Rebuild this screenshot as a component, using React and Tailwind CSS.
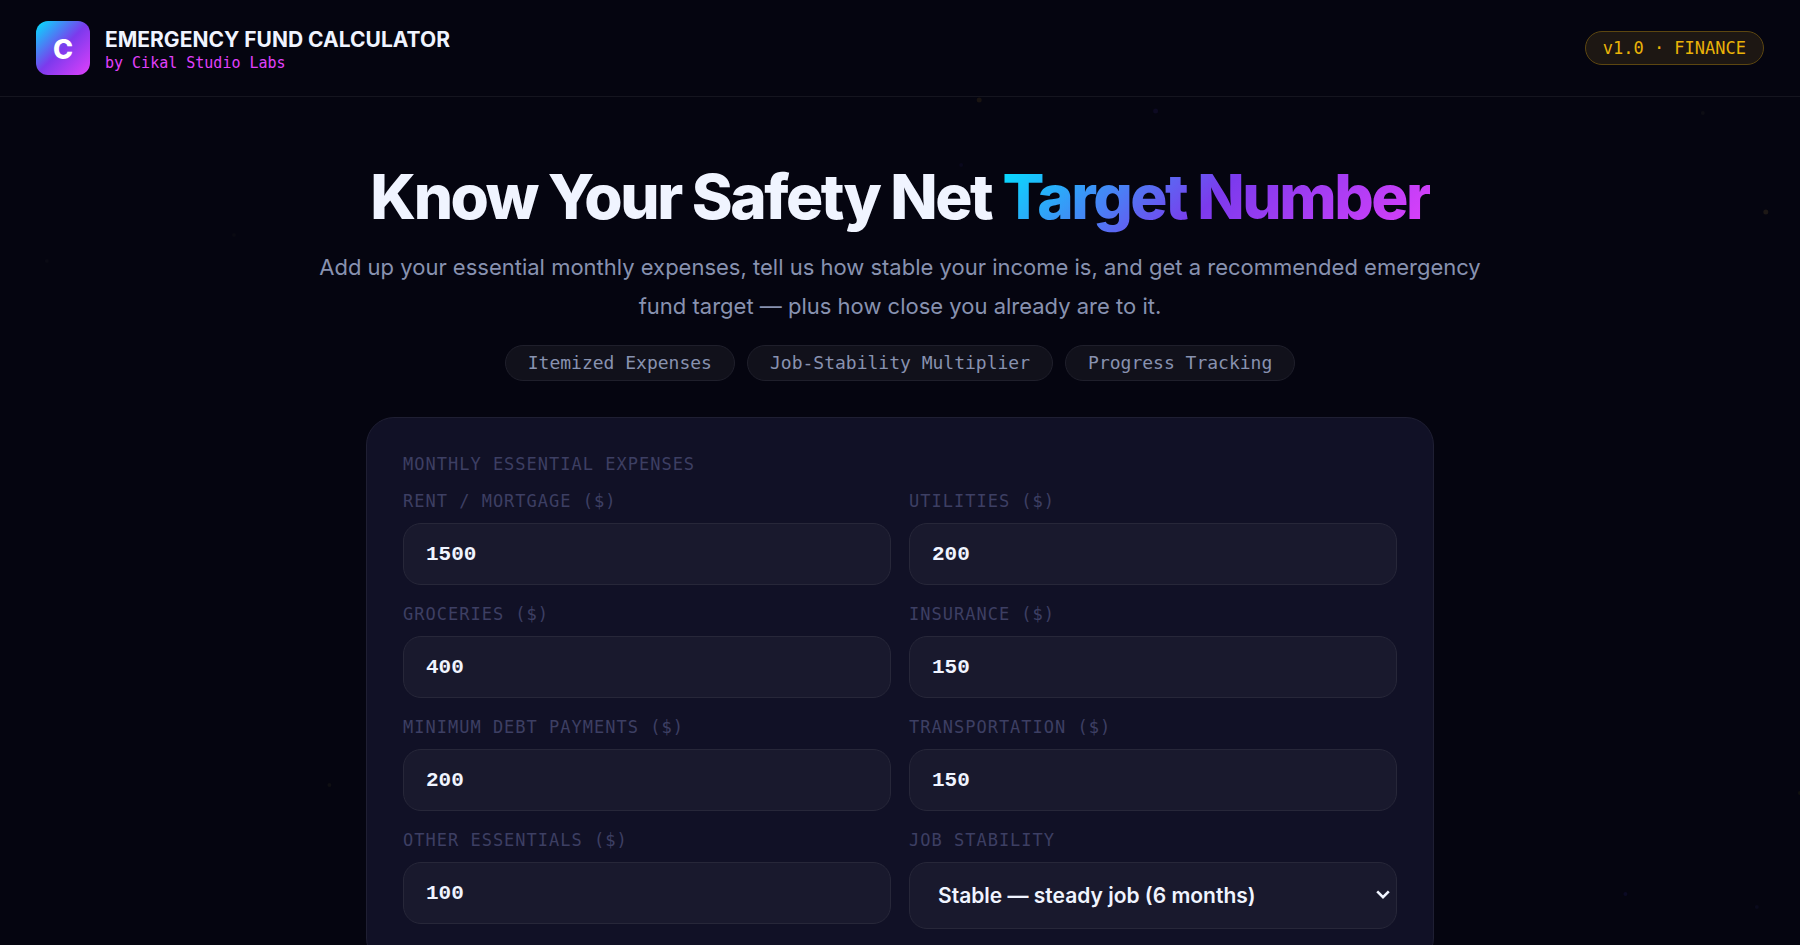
import React from "react"

const tags = ["Itemized Expenses", "Job-Stability Multiplier", "Progress Tracking"]

const fields = [
  { id: "rent", label: "Rent / Mortgage ($)", value: 1500 },
  { id: "utilities", label: "Utilities ($)", value: 200 },
  { id: "groceries", label: "Groceries ($)", value: 400 },
  { id: "insurance", label: "Insurance ($)", value: 150 },
  { id: "debt", label: "Minimum Debt Payments ($)", value: 200 },
  { id: "transport", label: "Transportation ($)", value: 150 },
  { id: "other", label: "Other Essentials ($)", value: 100 },
]

const Particles = (
  <svg className="absolute inset-0 -z-10 h-full w-full" aria-hidden="true">
    <circle cx="54.4%" cy="100" r="2.5" fill="#191412" />
    <circle cx="64.2%" cy="111" r="2.5" fill="#0d0a22" />
    <circle cx="94.6%" cy="113" r="2" fill="#0d0d14" />
    <circle cx="98.1%" cy="212" r="2.5" fill="#1d1816" />
    <circle cx="53.4%" cy="165" r="2" fill="#0a081c" />
    <circle cx="13%" cy="235" r="2" fill="#0a0a12" />
    <circle cx="2.6%" cy="261" r="2" fill="#0a0a14" />
    <circle cx="18.3%" cy="785" r="2" fill="#0f0f13" />
    <circle cx="90.3%" cy="894" r="2" fill="#0b0a24" />
    <circle cx="97.6%" cy="907" r="2" fill="#0a0a1c" />
    <circle cx="100%" cy="793" r="2" fill="#121210" />
  </svg>
)

function Header() {
  return (
    <header className="flex items-center justify-between border-b border-[#15151f] px-9 py-[21px]">
      <div className="flex items-center gap-[15px]">
        <div className="flex size-[54px] items-center justify-center rounded-xl bg-[linear-gradient(135deg,#00e5ff,#7c3aed_50%,#e040fb)] pt-1 text-[27px] font-extrabold text-white">
          C
        </div>
        <div className="pt-1">
          <div className="text-[21px] leading-[26px] font-bold">EMERGENCY FUND CALCULATOR</div>
          <div className="font-['DejaVu_Sans_Mono',monospace] text-[15px] leading-5 text-[#e040fb]">
            by Cikal Studio Labs
          </div>
        </div>
      </div>
      <span className="rounded-full border border-[#5c4610] bg-[#1d1713] px-[17px] py-1 font-['DejaVu_Sans_Mono',monospace] text-[17px] leading-6 text-[#eab308]">
        v1.0 · FINANCE
      </span>
    </header>
  )
}

function Hero() {
  return (
    <section className="flex flex-col items-center px-6 pt-16 text-center">
      <h1 className="text-[62px] leading-[72px] font-extrabold tracking-[-0.04em]">
        Know Your Safety Net{" "}
        <span className="bg-[linear-gradient(135deg,#00e5ff,#7c3aed_50%,#e040fb)] bg-clip-text text-transparent">
          Target Number
        </span>
      </h1>
      <p className="mt-[15px] max-w-[1170px] text-[22px] leading-[39px] text-[#8892b0]">
        Add up your essential monthly expenses, tell us how stable your income is, and get a
        recommended emergency fund target — plus how close you already are to it.
      </p>
      <ul className="mt-[19px] flex flex-wrap justify-center gap-3">
        {tags.map((tag) => (
          <li
            key={tag}
            className="rounded-full border border-[#1f1f2b] bg-[#11111b] px-[22px] py-1 font-['DejaVu_Sans_Mono',monospace] text-[18px] leading-[26px] text-[#8892b0]"
          >
            {tag}
          </li>
        ))}
      </ul>
    </section>
  )
}

const labelStyle =
  "block font-['DejaVu_Sans_Mono',monospace] text-[17px] leading-5 tracking-[1px] uppercase text-[#3d3f63]"

function Calculator() {
  return (
    <form className="mx-auto mt-9 w-full max-w-[1068px] rounded-[28px] border border-[#1f1f33] bg-[#111126] p-9">
      <h2 className={labelStyle}>Monthly Essential Expenses</h2>
      <div className="mt-[17px] grid grid-cols-2 items-start gap-x-[18px] gap-y-[19px]">
        {fields.map((field) => (
          <div key={field.id}>
            <label htmlFor={field.id} className={labelStyle}>
              {field.label}
            </label>
            <input
              id={field.id}
              type="text"
              inputMode="decimal"
              defaultValue={field.value}
              className="mt-3 block h-[62px] w-full rounded-[18px] border border-[#272739] bg-[#19192d] px-[22px] font-['Liberation_Mono',monospace] text-[21px] font-bold outline-none"
            />
          </div>
        ))}
        <div>
          <label htmlFor="stability" className={labelStyle}>
            Job Stability
          </label>
          <div className="relative mt-3">
            <select
              id="stability"
              defaultValue="6"
              className="block h-[67px] w-full appearance-none rounded-[18px] border border-[#272739] bg-[#19192d] pr-10 pl-7 text-[21px] font-semibold outline-none"
            >
              <option value="3">Very stable — dual income (3 months)</option>
              <option value="6">Stable — steady job (6 months)</option>
              <option value="9">Variable — freelance (9 months)</option>
            </select>
            <svg
              className="pointer-events-none absolute top-7 right-[7px] h-[10px] w-[14px]"
              viewBox="0 0 14 10"
              fill="none"
              stroke="currentColor"
              strokeWidth="2.6"
              aria-hidden="true"
            >
              <path d="M1.2 1.4 7 7.2l5.8-5.8" />
            </svg>
          </div>
        </div>
      </div>
    </form>
  )
}

export default function App() {
  return (
    <div className="relative isolate h-screen overflow-hidden bg-[#050510] font-['Inter',sans-serif] text-[#f0f4ff]">
      {Particles}
      <Header />
      <main>
        <Hero />
        <Calculator />
      </main>
    </div>
  )
}
